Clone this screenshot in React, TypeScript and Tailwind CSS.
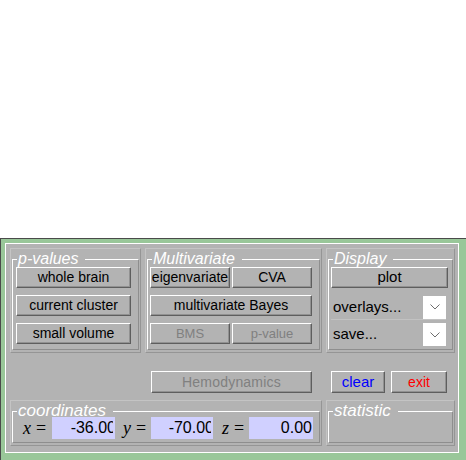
import React from "react";

function Btn({
  children,
  className = "",
  tone = "text-black",
}: {
  children?: React.ReactNode;
  className?: string;
  tone?: string;
}) {
  return (
    <div
      className={`flex items-center justify-center whitespace-nowrap bg-[#b3b3b3] border border-t-white border-l-white border-b-[#5e5e5e] border-r-[#5e5e5e] shadow-[inset_-1px_-1px_0_#919191] ${tone} ${className}`}
    >
      {children}
    </div>
  );
}

function Frame({
  title,
  className = "",
  legendSize = "text-[16px]",
  children,
}: {
  title: string;
  className?: string;
  legendSize?: string;
  children?: React.ReactNode;
}) {
  return (
    <div
      className={`flex flex-col px-[1px] pb-[2px] border border-t-[#c4c4c4] border-l-[#c4c4c4] border-b-[#959595] border-r-[#959595] ${className}`}
    >
      <fieldset className="mt-[2px] flex-1 min-h-0 border border-t-white border-l-white border-b-[#8e8e8e] border-r-[#8e8e8e]">
        <legend
          className={`ml-[4px] pl-[1px] pr-[7px] italic text-white leading-[16px] ${legendSize}`}
        >
          {title}
        </legend>
        {children}
      </fieldset>
    </div>
  );
}

function Chevron() {
  return (
    <svg width="10" height="6" viewBox="0 0 10 6" className="block">
      <polyline
        points="0.5,0.5 5,5 9.5,0.5"
        fill="none"
        stroke="#6e6e6e"
        strokeWidth="1"
      />
    </svg>
  );
}

function Popup({ label, className = "" }: { label: string; className?: string }) {
  return (
    <div className={`flex h-[25px] w-[115px] items-center justify-between ${className}`}>
      <span className="pl-[2px] text-[15px] text-black">{label}</span>
      <div className="flex h-[23px] w-[23px] items-center justify-center bg-white">
        <Chevron />
      </div>
    </div>
  );
}

function Field({ value, clip }: { value: string; clip: boolean }) {
  return (
    <div
      className={`flex h-[22px] items-center bg-[#d0d0ff] ${clip ? "pr-[2px]" : "pr-[1px]"}`}
    >
      <div className="w-full overflow-hidden whitespace-nowrap text-right text-[16px] leading-[20px] text-black">
        <span className={`inline-block ${clip ? "mr-[-3px]" : "mr-0"}`}>{value}</span>
      </div>
    </div>
  );
}

function Label({ v, pad }: { v: string; pad: string }) {
  return (
    <div
      className={`flex h-[22px] items-center whitespace-nowrap font-['Liberation_Serif',serif] text-[18px] text-black ${pad}`}
    >
      <i>{v}</i>
      <span className="ml-[5px]">=</span>
    </div>
  );
}

export default function App() {
  return (
    <div className="h-[460px] w-[466px] bg-white pt-[238px] font-['Liberation_Sans',Arial,sans-serif]">
      <div className="h-[222px] w-[466px] border-t border-l border-[#4a4a4a] bg-[#99c799] pt-[4px] pl-[4px] pr-[7px] pb-[7px]">
        <div className="h-[210px] w-[454px] border border-white bg-[#b3b3b3] pt-[4px] pl-[4px]">
          {/* Row 1 */}
          <div className="flex h-[105px] gap-[4px]">
            <Frame title="p-values" className="w-[131px]">
              <div className="flex flex-col gap-[7px] pl-[3px]">
                <Btn className="h-[21px] w-[115px] text-[14px]">whole brain</Btn>
                <Btn className="h-[21px] w-[115px] text-[14px]">current cluster</Btn>
                <Btn className="h-[21px] w-[115px] text-[14px]">small volume</Btn>
              </div>
            </Frame>
            <Frame title="Multivariate" className="w-[177px]">
              <div className="grid w-[164px] grid-cols-2 gap-x-[2px] gap-y-[7px] pl-[2px]">
                <Btn className="h-[21px] text-[14px]">eigenvariate</Btn>
                <Btn className="h-[21px] text-[14px]">CVA</Btn>
                <Btn className="col-span-2 h-[21px] text-[14px]">multivariate Bayes</Btn>
                <Btn className="h-[21px] text-[13px]" tone="text-[#808080]">
                  BMS
                </Btn>
                <Btn className="h-[21px] text-[13px]" tone="text-[#808080]">
                  p-value
                </Btn>
              </div>
            </Frame>
            <Frame title="Display" className="w-[129px]">
              <div className="flex flex-col pl-[2px]">
                <Btn className="h-[21px] w-[117px] text-[15px]">plot</Btn>
                <Popup label="overlays..." className="mt-[7px] border-b border-[#c2c2c2]" />
                <Popup label="save..." className="mt-[2px]" />
              </div>
            </Frame>
          </div>

          {/* Row 2 */}
          <div className="mt-[18px] flex h-[22px]">
            <Btn className="ml-[141px] w-[161px] text-[14px] tracking-[0.2px]" tone="text-[#808080]">
              Hemodynamics
            </Btn>
            <Btn className="ml-[19px] w-[54px] text-[15px]" tone="text-[#0000ff]">
              clear
            </Btn>
            <Btn className="ml-[6px] w-[56px] text-[14px]" tone="text-[#ff0000]">
              exit
            </Btn>
          </div>

          {/* Row 3 */}
          <div className="mt-[7px] flex h-[46px] gap-[4px]">
            <Frame title="coordinates" className="w-[312px]" legendSize="text-[17px]">
              <div className="-mt-[2px] flex">
                <Label v="x" pad="w-[39px] pl-[10px]" />
                <div className="w-[63px]">
                  <Field value="-36.00" clip />
                </div>
                <Label v="y" pad="w-[36px] pl-[8px]" />
                <div className="w-[62px]">
                  <Field value="-70.00" clip />
                </div>
                <Label v="z" pad="w-[36px] pl-[9px]" />
                <div className="w-[64px]">
                  <Field value="0.00" clip={false} />
                </div>
              </div>
            </Frame>
            <Frame title="statistic" className="w-[129px]" legendSize="text-[17px]" />
          </div>
        </div>
      </div>
    </div>
  );
}
